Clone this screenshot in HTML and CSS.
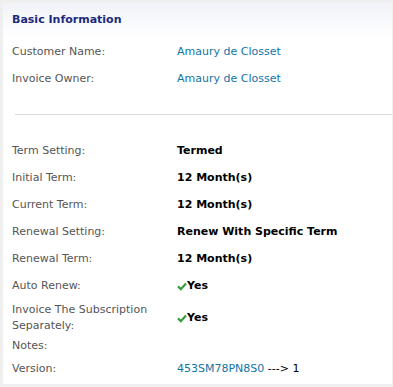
FILE: index.html
```html
<!DOCTYPE html>
<html lang="en">
<head>
    <meta charset="UTF-8">
    <title>Subscription - Basic Information</title>
    <link rel="stylesheet" href="styles.css">
</head>
<body>
    <div class="panel">
        <div class="panel-header">Basic Information</div>

        <div class="info-group">
            <div class="row">
                <div class="label">Customer Name:</div>
                <div class="value"><a href="#">Amaury de Closset</a></div>
            </div>
            <div class="row">
                <div class="label">Invoice Owner:</div>
                <div class="value"><a href="#">Amaury de Closset</a></div>
            </div>
        </div>

        <hr class="divider">

        <div class="info-group">
            <div class="row">
                <div class="label">Term Setting:</div>
                <div class="value strong">Termed</div>
            </div>
            <div class="row">
                <div class="label">Initial Term:</div>
                <div class="value strong">12 Month(s)</div>
            </div>
            <div class="row">
                <div class="label">Current Term:</div>
                <div class="value strong">12 Month(s)</div>
            </div>
            <div class="row">
                <div class="label">Renewal Setting:</div>
                <div class="value strong">Renew With Specific Term</div>
            </div>
            <div class="row">
                <div class="label">Renewal Term:</div>
                <div class="value strong">12 Month(s)</div>
            </div>
            <div class="row">
                <div class="label">Auto Renew:</div>
                <div class="value strong">
                    <svg class="check" width="10" height="9" viewBox="0 0 10 9"><path d="M1 4.2 L3.8 7.2 L9 1.4" fill="none" stroke="#2c9f3a" stroke-width="2.2" stroke-linejoin="miter"/></svg>Yes
                </div>
            </div>
            <div class="row row-tall">
                <div class="label">Invoice The Subscription Separately:</div>
                <div class="value strong">
                    <svg class="check" width="10" height="9" viewBox="0 0 10 9"><path d="M1 4.2 L3.8 7.2 L9 1.4" fill="none" stroke="#2c9f3a" stroke-width="2.2" stroke-linejoin="miter"/></svg>Yes
                </div>
            </div>
            <div class="row row-short">
                <div class="label">Notes:</div>
                <div class="value"></div>
            </div>
            <div class="row">
                <div class="label">Version:</div>
                <div class="value"><a href="#">453SM78PN8S0</a> ---&gt; 1</div>
            </div>
        </div>
    </div>
</body>
</html>
```

FILE: styles.css
```css
/* Reset */
* {
    margin: 0;
    padding: 0;
    box-sizing: border-box;
}

body {
    font-family: 'DejaVu Sans', Verdana, sans-serif;
    font-size: 11px;
    color: #555;
    background: #efefef;
    padding: 3px 1px 3px 3px;
}

/* Panel */
.panel {
    background: #fff;
    min-height: 381px;
}

.panel-header {
    height: 35px;
    padding: 10px 0 0 9px;
    font-weight: bold;
    color: #1b2a7d;
    background: linear-gradient(180deg, #f1f3f8, #ffffff);
}

.info-group {
    padding-left: 9px;
}

/* Rows */
.row {
    display: flex;
    align-items: center;
    min-height: 27px;
    line-height: 16px;
}

.row-tall {
    min-height: 37px;
}

.row-short {
    min-height: 19px;
}

.label {
    width: 165px;
    flex-shrink: 0;
    padding-right: 15px;
}

.value {
    color: #000;
}

.value a {
    color: #1274a6;
    text-decoration: none;
}

.strong {
    font-weight: bold;
    display: flex;
    align-items: center;
}

.check {
    margin-top: 1px;
}

/* Separator */
.divider {
    border: none;
    border-top: 1px solid #dcdcdc;
    margin: 22px 0 22px 12px;
}
```
